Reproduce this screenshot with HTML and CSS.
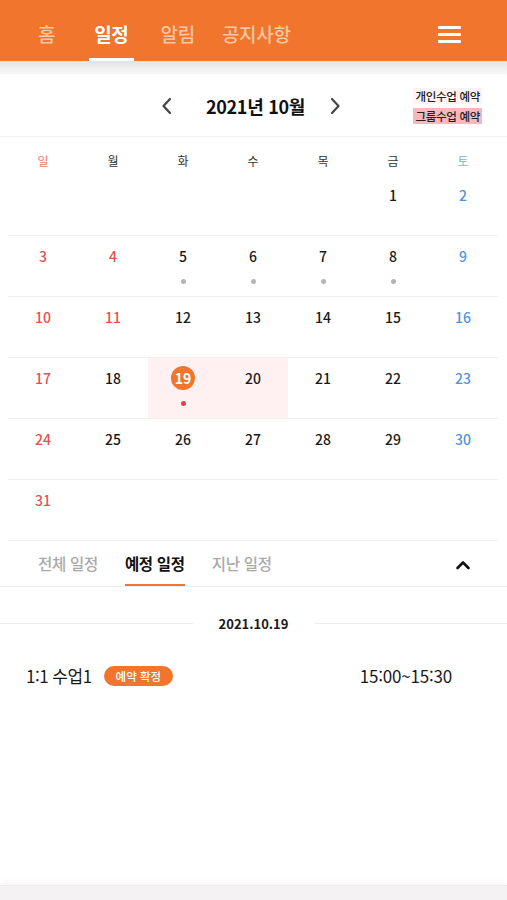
FILE: index.html
```html
<!DOCTYPE html>
<html lang="ko">
<head>
<meta charset="utf-8">
<link rel="stylesheet" href="styles.css">
</head>
<body>
<div class="app">
  <header class="topbar">
    <nav class="topnav">
      <a class="nav-item home">홈</a>
      <a class="nav-item active">일정</a>
      <a class="nav-item">알림</a>
      <a class="nav-item">공지사항</a>
    </nav>
    <button class="menu-btn" aria-label="menu">
      <span></span><span></span><span></span>
    </button>
  </header>
  <div class="shade"></div>

  <section class="month-bar">
    <div class="month-center">
      <svg class="chev prev" width="14" height="20" viewBox="0 0 14 20"><path d="M10 3 L3.5 10 L10 17" fill="none" stroke="#444" stroke-width="2.2" stroke-linecap="round" stroke-linejoin="round"/></svg>
      <h1 class="month-title">2021년 10월</h1>
      <svg class="chev next" width="14" height="20" viewBox="0 0 14 20"><path d="M4 3 L10.5 10 L4 17" fill="none" stroke="#444" stroke-width="2.2" stroke-linecap="round" stroke-linejoin="round"/></svg>
    </div>
    <div class="legend">
      <span class="legend-item personal">개인수업 예약</span>
      <span class="legend-item group">그룹수업 예약</span>
    </div>
  </section>

  <section class="calendar">
    <div class="weekdays">
      <span class="sun-h">일</span><span>월</span><span>화</span><span>수</span><span>목</span><span>금</span><span class="sat-h">토</span>
    </div>
    <div class="week">
      <div class="day"></div><div class="day"></div><div class="day"></div><div class="day"></div><div class="day"></div>
      <div class="day"><span class="num">1</span></div>
      <div class="day sat"><span class="num">2</span></div>
    </div>
    <div class="week">
      <div class="day sun"><span class="num">3</span></div>
      <div class="day sun"><span class="num">4</span></div>
      <div class="day"><span class="num">5</span><i class="dot"></i></div>
      <div class="day"><span class="num">6</span><i class="dot"></i></div>
      <div class="day"><span class="num">7</span><i class="dot"></i></div>
      <div class="day"><span class="num">8</span><i class="dot"></i></div>
      <div class="day sat"><span class="num">9</span></div>
    </div>
    <div class="week">
      <div class="day sun"><span class="num">10</span></div>
      <div class="day sun"><span class="num">11</span></div>
      <div class="day"><span class="num">12</span></div>
      <div class="day"><span class="num">13</span></div>
      <div class="day"><span class="num">14</span></div>
      <div class="day"><span class="num">15</span></div>
      <div class="day sat"><span class="num">16</span></div>
    </div>
    <div class="week">
      <div class="day sun"><span class="num">17</span></div>
      <div class="day"><span class="num">18</span></div>
      <div class="day hl"><span class="num today">19</span><i class="dot red"></i></div>
      <div class="day hl"><span class="num">20</span></div>
      <div class="day"><span class="num">21</span></div>
      <div class="day"><span class="num">22</span></div>
      <div class="day sat"><span class="num">23</span></div>
    </div>
    <div class="week">
      <div class="day sun"><span class="num">24</span></div>
      <div class="day"><span class="num">25</span></div>
      <div class="day"><span class="num">26</span></div>
      <div class="day"><span class="num">27</span></div>
      <div class="day"><span class="num">28</span></div>
      <div class="day"><span class="num">29</span></div>
      <div class="day sat"><span class="num">30</span></div>
    </div>
    <div class="week">
      <div class="day sun"><span class="num">31</span></div>
      <div class="day"></div><div class="day"></div><div class="day"></div><div class="day"></div><div class="day"></div><div class="day"></div>
    </div>
  </section>

  <section class="tabs">
    <div class="tab-list">
      <span class="tab">전체 일정</span>
      <span class="tab active">예정 일정</span>
      <span class="tab">지난 일정</span>
    </div>
    <svg class="collapse" width="16" height="12" viewBox="0 0 16 12"><path d="M2.5 9 L8 3.5 L13.5 9" fill="none" stroke="#111" stroke-width="2.6" stroke-linecap="round" stroke-linejoin="round"/></svg>
  </section>

  <section class="schedule">
    <div class="date-sep"><span class="line"></span><span class="date">2021.10.19</span><span class="line"></span></div>
    <div class="event">
      <div class="event-left">
        <span class="event-title">1:1 수업1</span>
        <span class="badge">예약 확정</span>
      </div>
      <span class="event-time">15:00~15:30</span>
    </div>
  </section>

  <footer class="bottom-bar"></footer>
</div>
</body>
</html>
```

FILE: styles.css
```css
* { box-sizing: border-box; }
html, body { margin: 0; padding: 0; }
body {
  background: #fff;
  font-family: "Noto Sans CJK KR", "Noto Sans", sans-serif;
  color: #222;
}
.app {
  height: 900px;
  display: flex;
  flex-direction: column;
}
.topbar {
  height: 61px;
  background: #f1752c;
  display: flex;
  align-items: stretch;
  justify-content: space-between;
  padding: 0 46px 0 0;
}
.topnav {
  display: flex;
  align-items: stretch;
}
.nav-item {
  display: flex;
  align-items: center;
  padding: 8px 0 0;
  margin-left: 27px;
  font-size: 19px;
  color: #fac6a4;
  font-weight: 500;
  border-bottom: 3px solid transparent;
  letter-spacing: -0.3px;
}
.nav-item.home { margin-left: 38px; }
.nav-item.active {
  color: #fff;
  font-weight: 700;
  border-bottom-color: #fff;
  padding: 8px 5px 0;
  margin-left: 34px;
}
.menu-btn {
  background: none;
  border: 0;
  padding: 8px 0 0;
  width: 23px;
  display: flex;
  flex-direction: column;
  justify-content: center;
  gap: 4px;
}
.menu-btn span {
  display: block;
  height: 3px;
  background: #fff;
  border-radius: 1px;
}
.shade {
  height: 13px;
  background: linear-gradient(#e2e2e2, #f1f1f1 60%, #f6f6f6);
}
.month-bar {
  height: 63px;
  display: grid;
  grid-template-columns: 1fr auto 1fr;
  align-items: center;
  border-bottom: 1px solid #f3f3f3;
}
.month-center {
  grid-column: 2;
  display: flex;
  align-items: center;
  padding-top: 2px;
}
.chev.prev { margin-right: 32px; }
.chev.next { margin-left: 23px; margin-right: 5px; }
.month-title {
  margin: 0;
  font-size: 18px;
  font-weight: 700;
  color: #111;
  letter-spacing: -0.3px;
}
.legend {
  grid-column: 3;
  justify-self: end;
  margin-right: 25px;
  display: flex;
  flex-direction: column;
  align-items: flex-end;
  gap: 4px;
  padding-top: 2px;
}
.legend-item {
  font-size: 11.5px;
  font-weight: 500;
  color: #222;
  line-height: 16px;
  padding: 0 2px;
  letter-spacing: -0.3px;
}
.legend-item.personal { background: #fff3f4; }
.legend-item.group { background: #f8b7bd; }
.calendar {
  padding: 0 9px 0 8px;
}
.weekdays {
  display: grid;
  grid-template-columns: repeat(7, 1fr);
  height: 38px;
  align-items: end;
  padding-bottom: 6px;
  font-size: 12px;
  color: #333;
  text-align: center;
}
.weekdays .sun-h { color: #f07474; }
.weekdays .sat-h { color: #7fb0ee; }
.week {
  display: grid;
  grid-template-columns: repeat(7, 1fr);
  height: 61px;
  border-bottom: 1px solid #f0f0f0;
}
.week:first-of-type { height: 60px; }
.day {
  display: flex;
  flex-direction: column;
  align-items: center;
  padding-top: 8px;
  font-size: 14px;
  color: #1a1a1a;
}
.day .num {
  width: 24px;
  height: 24px;
  display: flex;
  align-items: center;
  justify-content: center;
  font-weight: 500;
}
.day.sun { color: #e8504e; }
.day.sat { color: #4f93df; }
.day.hl { background: #fff0f1; }
.num.today {
  background: #f1752c;
  color: #fff;
  border-radius: 50%;
  font-weight: 700;
}
.dot {
  display: block;
  width: 5px;
  height: 5px;
  border-radius: 50%;
  background: #b4b4b4;
  margin-top: 11px;
}
.dot.red { background: #ef3b4a; }
.tabs {
  height: 46px;
  display: flex;
  align-items: stretch;
  justify-content: space-between;
  padding: 0 36px 0 38px;
  border-bottom: 1px solid #eeeeee;
}
.tab-list {
  display: flex;
  align-items: stretch;
  gap: 27px;
}
.tab {
  display: flex;
  align-items: center;
  padding: 0;
  font-size: 15.5px;
  color: #a9a9a9;
  border-bottom: 2px solid transparent;
  font-weight: 500;
  letter-spacing: -0.3px;
}
.tab.active {
  color: #111;
  font-weight: 700;
  border-bottom-color: #f1752c;
}
.collapse { align-self: center; margin-top: 2px; }
.schedule {
  flex: 1;
  padding-top: 27px;
}
.date-sep {
  display: flex;
  align-items: center;
}
.date-sep .line {
  flex: 1;
  height: 1px;
  background: #ececec;
}
.date-sep .date {
  width: 122px;
  text-align: center;
  font-size: 13px;
  font-weight: 700;
  color: #1a1a1a;
}
.event {
  display: flex;
  align-items: center;
  justify-content: space-between;
  padding: 0 55px 0 26px;
  margin-top: 30px;
}
.event-left {
  display: flex;
  align-items: center;
  gap: 12px;
}
.event-title {
  font-size: 17px;
  color: #1a1a1a;
  letter-spacing: -0.5px;
}
.badge {
  background: #f1752c;
  color: #fff;
  font-size: 11.5px;
  line-height: 20px;
  padding: 0 12px;
  border-radius: 10px;
  font-weight: 500;
}
.event-time {
  font-size: 17px;
  color: #1a1a1a;
  letter-spacing: -0.2px;
}
.bottom-bar {
  height: 15px;
  background: #f4f2f2;
  box-shadow: 0 -3px 6px rgba(0,0,0,0.04);
  border-top: 1px solid #eeeaea;
}
```
